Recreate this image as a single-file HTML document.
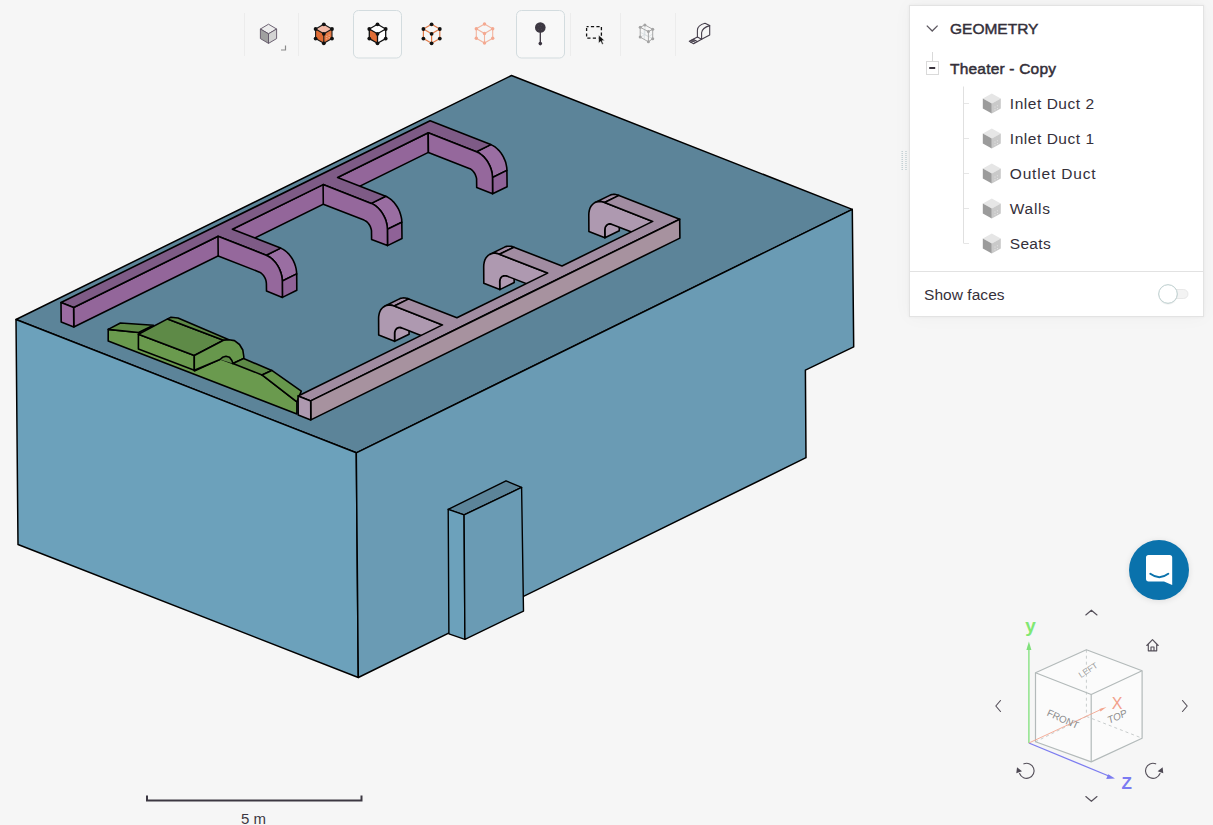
<!DOCTYPE html>
<html><head><meta charset="utf-8">
<style>
html,body{margin:0;padding:0;}
body{width:1213px;height:825px;overflow:hidden;background:#f6f6f6;position:relative;font-family:"Liberation Sans",sans-serif;color:#35303a;}
.abs{position:absolute;}
#model{position:absolute;left:0;top:0;}
.panel{position:absolute;left:909px;top:5px;width:293px;height:310px;background:#fff;border:1px solid #e3e3e3;box-shadow:0 0 3px rgba(0,0,0,0.05), 0 0 18px rgba(0,0,0,0.035);}
.t{position:absolute;white-space:nowrap;line-height:1;}
</style></head>
<body>
<svg id="model" width="1213" height="825" viewBox="0 0 1213 825">
<polygon points="511.5,75.5 852.3,209.4 356.3,452.8 16.0,319.5" fill="#5c8499" stroke="#000" stroke-width="1.5" stroke-linejoin="round" />
<polygon points="16.0,319.5 356.3,452.8 358.3,677.5 18.0,544.5" fill="#6ca1bb" stroke="#000" stroke-width="1.5" stroke-linejoin="round" />
<polygon points="356.3,452.8 852.3,209.4 853.7,346.8 805.4,370.2 806.0,457.7 358.3,677.5" fill="#6a9bb4" stroke="#000" stroke-width="1.5" stroke-linejoin="round" />
<polygon points="448.2,509.3 506.0,480.8 521.6,487.4 464.1,514.9" fill="#5c8499" stroke="#000" stroke-width="1.4" stroke-linejoin="round" />
<polygon points="448.2,509.3 464.1,514.9 464.9,639.3 448.9,633.8" fill="#6ca1bb" stroke="#000" stroke-width="1.4" stroke-linejoin="round" />
<polygon points="464.1,514.9 521.6,487.4 523.5,611.1 464.9,639.3" fill="#6a9bb4" stroke="#000" stroke-width="1.4" stroke-linejoin="round" />
<polygon points="108.2,329.4 138.6,332.5 194.3,353.8 194.4,370.9 220.5,358.9 232.9,363.4 243.6,358.6 262.0,374.9 296.9,401.8 296.9,414.0 108.2,340.9" fill="#6a9a4e" stroke="#000" stroke-width="1.6" stroke-linejoin="round" />
<polygon points="108.2,329.4 120.4,323.0 153.5,325.2 138.6,332.5" fill="#5e8a47" stroke="#000" stroke-width="1.6" stroke-linejoin="round" />
<polygon points="138.4,334.2 194.3,355.5 194.3,370.3 138.4,349.1" fill="#6a9a4e" stroke="#000" stroke-width="1.6" stroke-linejoin="round" />
<polygon points="138.4,334.2 167.6,318.9 223.5,340.2 194.3,355.5" fill="#5e8a47" stroke="#000" stroke-width="1.6" stroke-linejoin="round" />
<polygon points="167.6,318.9 171.0,317.2 178.0,318.0 228.9,339.7 223.5,340.2" fill="#5e8a47" stroke="#000" stroke-width="1.6" stroke-linejoin="round" />
<polygon points="220.0,359.5 222.5,357.3 226.0,356.3 229.5,357.2 231.9,360.5 232.9,363.4" fill="#5e8a47" stroke="none" stroke-width="1.6" stroke-linejoin="round" />
<polygon points="194.3,355.5 223.5,340.2 228.9,339.7 234.5,340.6 239.5,344.5 242.8,350.0 243.8,356.5 243.8,358.6 232.9,363.4 231.9,360.5 229.5,357.2 226.0,356.3 222.5,357.3 220.0,359.5 194.3,370.3" fill="#67974c" stroke="#000" stroke-width="1.6" stroke-linejoin="round" />
<polygon points="243.6,358.6 271.8,370.4 262.0,374.9 232.9,363.4" fill="#5e8a47" stroke="#000" stroke-width="1.6" stroke-linejoin="round" />
<polygon points="271.8,370.4 301.3,391.1 296.9,401.8 262.0,374.9" fill="#67974c" stroke="#000" stroke-width="1.6" stroke-linejoin="round" />
<polygon points="73.6,307.5 428.2,132.8 428.4,152.4 73.8,327.0" fill="#93669a" stroke="#000" stroke-width="1.6" stroke-linejoin="round" />
<polygon points="266.2,255.2 268.2,256.2 270.3,257.5 272.3,259.1 274.1,261.0 275.9,263.1 277.5,265.4 278.9,267.8 280.0,270.4 281.0,273.1 281.7,275.7 282.1,278.4 282.3,281.0 296.7,273.9 296.5,271.3 296.1,268.6 295.4,265.9 294.5,263.3 293.3,260.7 291.9,258.2 290.3,255.9 288.6,253.8 286.7,252.0 284.7,250.4 282.7,249.1 280.6,248.1" fill="#9a6ea2" stroke="#000" stroke-width="1.6" stroke-linejoin="round" />
<polygon points="282.3,281.0 296.7,273.9 296.8,290.3 282.4,297.4" fill="#8f6297" stroke="#000" stroke-width="1.6" stroke-linejoin="round" />
<polygon points="371.3,203.4 373.4,204.4 375.4,205.7 377.4,207.3 379.3,209.2 381.0,211.3 382.6,213.6 384.0,216.1 385.2,218.6 386.1,221.3 386.8,224.0 387.2,226.7 387.4,229.3 401.8,222.2 401.7,219.5 401.2,216.9 400.5,214.2 399.6,211.5 398.4,208.9 397.0,206.5 395.4,204.2 393.7,202.1 391.8,200.2 389.8,198.6 387.8,197.3 385.7,196.3" fill="#9a6ea2" stroke="#000" stroke-width="1.6" stroke-linejoin="round" />
<polygon points="387.4,229.3 401.8,222.2 402.0,238.5 387.5,245.6" fill="#8f6297" stroke="#000" stroke-width="1.6" stroke-linejoin="round" />
<polygon points="476.4,151.7 478.5,152.7 480.5,154.0 482.5,155.6 484.4,157.4 486.1,159.5 487.7,161.8 489.1,164.3 490.3,166.9 491.2,169.5 491.9,172.2 492.3,174.9 492.5,177.5 506.9,170.4 506.8,167.8 506.3,165.1 505.7,162.4 504.7,159.8 503.5,157.2 502.1,154.7 500.6,152.4 498.8,150.3 496.9,148.5 495.0,146.9 492.9,145.6 490.8,144.6" fill="#9a6ea2" stroke="#000" stroke-width="1.6" stroke-linejoin="round" />
<polygon points="492.5,177.5 506.9,170.4 507.1,186.7 492.6,193.8" fill="#8f6297" stroke="#000" stroke-width="1.6" stroke-linejoin="round" />
<polygon points="61.0,302.5 430.1,120.8 490.8,144.6 476.4,151.7 428.2,132.8 337.6,177.5 385.7,196.3 371.3,203.4 323.1,184.6 232.4,229.2 280.6,248.1 266.2,255.2 218.0,236.3 73.6,307.5" fill="#7e5b86" stroke="#000" stroke-width="1.6" stroke-linejoin="round" />
<polygon points="218.0,236.3 266.2,255.2 268.2,256.2 270.3,257.5 272.3,259.1 274.1,261.0 275.9,263.1 277.5,265.4 278.9,267.8 280.0,270.4 281.0,273.1 281.7,275.7 282.1,278.4 282.3,281.0 282.4,297.4 266.5,291.1 266.4,283.8 266.4,283.8 266.3,282.6 266.1,281.3 265.8,280.1 265.4,278.9 264.8,277.7 264.2,276.6 263.5,275.5 262.6,274.5 261.8,273.7 260.8,272.9 259.9,272.3 258.9,271.9 218.2,255.9" fill="#95689c" stroke="#000" stroke-width="1.6" stroke-linejoin="round" />
<polygon points="323.1,184.6 371.3,203.4 373.4,204.4 375.4,205.7 377.4,207.3 379.3,209.2 381.0,211.3 382.6,213.6 384.0,216.1 385.2,218.6 386.1,221.3 386.8,224.0 387.2,226.7 387.4,229.3 387.5,245.6 371.6,239.4 371.5,232.0 371.5,232.0 371.5,230.8 371.3,229.6 370.9,228.3 370.5,227.1 370.0,225.9 369.3,224.8 368.6,223.7 367.8,222.8 366.9,221.9 366.0,221.2 365.0,220.6 364.0,220.1 323.3,204.2" fill="#95689c" stroke="#000" stroke-width="1.6" stroke-linejoin="round" />
<polygon points="428.2,132.8 476.4,151.7 478.5,152.7 480.5,154.0 482.5,155.6 484.4,157.4 486.1,159.5 487.7,161.8 489.1,164.3 490.3,166.9 491.2,169.5 491.9,172.2 492.3,174.9 492.5,177.5 492.6,193.8 476.7,187.6 476.6,180.2 476.6,180.2 476.6,179.0 476.4,177.8 476.0,176.6 475.6,175.4 475.1,174.2 474.4,173.0 473.7,172.0 472.9,171.0 472.0,170.2 471.1,169.4 470.1,168.8 469.2,168.4 428.4,152.4" fill="#95689c" stroke="#000" stroke-width="1.6" stroke-linejoin="round" />
<polygon points="61.0,302.5 73.6,307.5 73.8,327.0 61.2,322.1" fill="#9b6ca2" stroke="#000" stroke-width="1.6" stroke-linejoin="round" />
<polygon points="394.6,341.3 394.6,334.0 394.6,332.8 394.8,331.7 395.1,330.8 395.5,329.9 396.1,329.1 396.7,328.5 397.4,328.0 398.2,327.6 399.1,327.5 400.0,327.4 400.9,327.6 401.9,327.9 416.3,320.8 415.4,320.5 414.4,320.3 413.5,320.4 412.7,320.5 411.9,320.9 411.1,321.4 410.5,322.0 410.0,322.8 409.6,323.6 409.3,324.6 409.1,325.7 409.0,326.9 409.1,334.2" fill="#b09bb2" stroke="#000" stroke-width="1.6" stroke-linejoin="round" />
<polygon points="394.3,306.0 393.5,305.7 392.7,305.5 391.8,305.3 391.0,305.2 390.2,305.1 389.4,305.0 388.6,305.1 387.9,305.1 387.1,305.3 386.4,305.5 385.7,305.7 385.0,306.0 399.4,298.9 400.1,298.6 400.8,298.3 401.6,298.2 402.3,298.0 403.1,298.0 403.9,297.9 404.7,298.0 405.5,298.0 406.3,298.2 407.1,298.4 407.9,298.6 408.8,298.9" fill="#a48ea6" stroke="#000" stroke-width="1.6" stroke-linejoin="round" />
<polygon points="499.8,289.6 499.7,282.2 499.7,281.1 499.9,280.0 500.2,279.0 500.6,278.1 501.2,277.3 501.8,276.7 502.5,276.2 503.3,275.9 504.2,275.7 505.1,275.7 506.1,275.8 507.0,276.1 521.5,269.0 520.5,268.7 519.5,268.6 518.6,268.6 517.8,268.8 517.0,269.1 516.2,269.6 515.6,270.2 515.1,271.0 514.7,271.9 514.4,272.9 514.2,273.9 514.1,275.1 514.2,282.5" fill="#b09bb2" stroke="#000" stroke-width="1.6" stroke-linejoin="round" />
<polygon points="499.4,254.3 498.6,254.0 497.8,253.7 497.0,253.5 496.1,253.4 495.3,253.3 494.5,253.3 493.7,253.3 493.0,253.4 492.2,253.5 491.5,253.7 490.8,253.9 490.1,254.2 504.6,247.1 505.2,246.8 505.9,246.6 506.7,246.4 507.4,246.3 508.2,246.2 509.0,246.2 509.8,246.2 510.6,246.3 511.4,246.4 512.2,246.6 513.1,246.9 513.9,247.2" fill="#a48ea6" stroke="#000" stroke-width="1.6" stroke-linejoin="round" />
<polygon points="604.9,237.8 604.8,230.4 604.9,229.3 605.0,228.2 605.3,227.2 605.8,226.3 606.3,225.6 606.9,224.9 607.6,224.5 608.4,224.1 609.3,223.9 610.2,223.9 611.2,224.1 612.1,224.4 626.6,217.3 625.6,217.0 624.7,216.8 623.7,216.8 622.9,217.0 622.1,217.3 621.4,217.8 620.7,218.5 620.2,219.2 619.8,220.1 619.5,221.1 619.3,222.2 619.2,223.3 619.3,230.7" fill="#b09bb2" stroke="#000" stroke-width="1.6" stroke-linejoin="round" />
<polygon points="604.6,202.5 603.7,202.2 602.9,202.0 602.1,201.8 601.3,201.6 600.4,201.5 599.6,201.5 598.9,201.5 598.1,201.6 597.3,201.8 596.6,201.9 595.9,202.2 595.2,202.5 609.7,195.4 610.4,195.1 611.1,194.8 611.8,194.6 612.5,194.5 613.3,194.4 614.1,194.4 614.9,194.4 615.7,194.5 616.5,194.7 617.3,194.9 618.2,195.1 619.0,195.4" fill="#a48ea6" stroke="#000" stroke-width="1.6" stroke-linejoin="round" />
<polygon points="442.5,324.9 394.3,306.0 392.3,305.4 390.2,305.1 388.2,305.1 386.4,305.5 384.7,306.2 383.1,307.2 381.8,308.5 380.6,310.1 379.7,312.0 379.1,314.1 378.7,316.3 378.6,318.7 378.7,335.1 394.6,341.3 394.6,334.0 394.6,334.0 394.6,332.8 394.8,331.7 395.1,330.8 395.5,329.9 396.1,329.1 396.7,328.5 397.4,328.0 398.2,327.6 399.1,327.5 400.0,327.4 400.9,327.6 401.9,327.9 442.7,343.9" fill="#ae99b0" stroke="#000" stroke-width="1.6" stroke-linejoin="round" />
<polygon points="547.6,273.1 499.4,254.3 497.4,253.6 495.3,253.3 493.4,253.3 491.5,253.7 489.8,254.4 488.2,255.4 486.9,256.7 485.7,258.3 484.8,260.2 484.2,262.3 483.8,264.6 483.7,267.0 483.8,283.3 499.8,289.6 499.7,282.2 499.7,282.2 499.7,281.1 499.9,280.0 500.2,279.0 500.6,278.1 501.2,277.3 501.8,276.7 502.5,276.2 503.3,275.9 504.2,275.7 505.1,275.7 506.1,275.8 507.0,276.1 547.8,292.1" fill="#ae99b0" stroke="#000" stroke-width="1.6" stroke-linejoin="round" />
<polygon points="652.7,221.4 604.6,202.5 602.5,201.9 600.4,201.5 598.5,201.6 596.6,201.9 594.9,202.6 593.3,203.7 592.0,205.0 590.8,206.6 589.9,208.4 589.3,210.5 588.9,212.8 588.8,215.2 588.9,231.6 604.9,237.8 604.8,230.4 604.8,230.4 604.9,229.3 605.0,228.2 605.3,227.2 605.8,226.3 606.3,225.6 606.9,224.9 607.6,224.5 608.4,224.1 609.3,223.9 610.2,223.9 611.2,224.1 612.1,224.4 652.9,240.3" fill="#ae99b0" stroke="#000" stroke-width="1.6" stroke-linejoin="round" />
<polygon points="310.7,400.9 679.7,219.2 619.0,195.4 604.6,202.5 652.7,221.4 562.0,266.0 513.9,247.2 499.4,254.3 547.6,273.1 456.9,317.8 408.8,298.9 394.3,306.0 442.5,324.9 298.1,396.0" fill="#a18ca1" stroke="#000" stroke-width="1.6" stroke-linejoin="round" />
<polygon points="310.7,400.9 679.7,219.2 679.9,238.1 310.8,419.9" fill="#a7929f" stroke="#000" stroke-width="1.6" stroke-linejoin="round" />
<polygon points="298.1,396.0 310.7,400.9 310.8,419.9 298.2,415.0" fill="#ae99b0" stroke="#000" stroke-width="1.6" stroke-linejoin="round" />
</svg>

<!-- toolbar -->
<svg class="abs" style="left:0;top:0" width="760" height="70" viewBox="0 0 760 70">
  <g stroke="#ececec" stroke-width="1">
    <line x1="244.5" y1="13" x2="244.5" y2="56"/>
    <line x1="298.5" y1="13" x2="298.5" y2="56"/>
    <line x1="570.5" y1="13" x2="570.5" y2="56"/>
    <line x1="620.5" y1="13" x2="620.5" y2="56"/>
    <line x1="675.5" y1="13" x2="675.5" y2="56"/>
  </g>
  <rect x="353.5" y="10.5" width="48" height="47.5" rx="5" fill="#f8f8f8" stroke="#d3dcdf"/>
  <rect x="516.5" y="10.5" width="48" height="47.5" rx="5" fill="#f8f8f8" stroke="#d3dcdf"/>
  <!-- icon1 grey cube -->
  <g transform="translate(268.5,33.8)">
    <polygon points="0,-9.6 8.1,-4.8 0,0 -8.1,-4.8" fill="#ededed" stroke="#5f5465" stroke-width="0.9" stroke-linejoin="round"/>
    <polygon points="-8.1,-4.8 0,0 0,9.6 -8.1,4.8" fill="#a0a0a0" stroke="#5f5465" stroke-width="0.9" stroke-linejoin="round"/>
    <polygon points="8.1,-4.8 0,0 0,9.6 8.1,4.8" fill="#d3d3d3" stroke="#5f5465" stroke-width="0.9" stroke-linejoin="round"/>
  </g>
  <polyline points="281,50 285.5,50 285.5,45.5" fill="none" stroke="#8a8a8a" stroke-width="1.2"/>
  <!-- icon2 orange solid cube -->
  <g transform="translate(323.8,33.8)">
    <polygon points="0,-9.5 8.2,-4.8 0,0 -8.2,-4.8" fill="#f3b9a6"/>
    <polygon points="-8.2,-4.8 0,0 0,9.5 -8.2,4.8" fill="#e06d35"/>
    <polygon points="8.2,-4.8 0,0 0,9.5 8.2,4.8" fill="#e57a45"/>
    <g fill="none" stroke="#1a1a1a" stroke-width="1.1" stroke-linejoin="round">
      <polygon points="0,-9.5 8.2,-4.8 8.2,4.8 0,9.5 -8.2,4.8 -8.2,-4.8"/>
      <polyline points="-8.2,-4.8 0,0 8.2,-4.8"/><line x1="0" y1="0" x2="0" y2="9.5"/>
    </g>
    <g fill="#f6d0c0"><circle cx="3" cy="2.5" r="0.55"/><circle cx="5.3" cy="1.3" r="0.55"/><circle cx="3" cy="5" r="0.55"/><circle cx="5.3" cy="3.8" r="0.55"/></g>
    <g fill="#111"><circle cx="0" cy="-9.5" r="1.9"/><circle cx="8.2" cy="-4.8" r="1.9"/><circle cx="-8.2" cy="-4.8" r="1.9"/><circle cx="0" cy="0" r="1.9"/><circle cx="8.2" cy="4.8" r="1.9"/><circle cx="-8.2" cy="4.8" r="1.9"/><circle cx="0" cy="9.5" r="1.9"/></g>
  </g>
  <!-- icon3 white cube with orange left face -->
  <g transform="translate(377.5,33.8)">
    <polygon points="0,-9.5 8.2,-4.8 0,0 -8.2,-4.8" fill="#fff"/>
    <polygon points="-8.2,-4.8 0,0 0,9.5 -8.2,4.8" fill="#e06d35"/>
    <polygon points="8.2,-4.8 0,0 0,9.5 8.2,4.8" fill="#fff"/>
    <g fill="none" stroke="#111" stroke-width="1.3" stroke-linejoin="round">
      <polygon points="0,-9.5 8.2,-4.8 8.2,4.8 0,9.5 -8.2,4.8 -8.2,-4.8"/>
      <polyline points="-8.2,-4.8 0,0 8.2,-4.8"/><line x1="0" y1="0" x2="0" y2="9.5"/>
    </g>
    <g fill="#111"><circle cx="0" cy="-9.5" r="1.9"/><circle cx="8.2" cy="-4.8" r="1.9"/><circle cx="-8.2" cy="-4.8" r="1.9"/><circle cx="0" cy="0" r="1.9"/><circle cx="8.2" cy="4.8" r="1.9"/><circle cx="-8.2" cy="4.8" r="1.9"/><circle cx="0" cy="9.5" r="1.9"/></g>
  </g>
  <!-- icon4 orange wireframe -->
  <g transform="translate(431.6,33.8)">
    <g fill="none" stroke="#e27a48" stroke-width="1.2" stroke-linejoin="round">
      <polygon points="0,-9.5 8.2,-4.8 8.2,4.8 0,9.5 -8.2,4.8 -8.2,-4.8"/>
      <polyline points="-8.2,-4.8 0,0 8.2,-4.8"/><line x1="0" y1="0" x2="0" y2="9.5"/>
    </g>
    <g fill="#111"><circle cx="0" cy="-9.5" r="1.9"/><circle cx="8.2" cy="-4.8" r="1.9"/><circle cx="-8.2" cy="-4.8" r="1.9"/><circle cx="0" cy="0" r="1.9"/><circle cx="8.2" cy="4.8" r="1.9"/><circle cx="-8.2" cy="4.8" r="1.9"/><circle cx="0" cy="9.5" r="1.9"/></g>
  </g>
  <!-- icon5 light salmon wireframe -->
  <g transform="translate(484.5,33.5)">
    <g fill="none" stroke="#f2b5a0" stroke-width="1.1" stroke-linejoin="round">
      <polygon points="0,-9.5 8.2,-4.8 8.2,4.8 0,9.5 -8.2,4.8 -8.2,-4.8"/>
      <polyline points="-8.2,-4.8 0,0 8.2,-4.8"/><line x1="0" y1="0" x2="0" y2="9.5"/>
    </g>
    <g fill="#f4a890"><circle cx="0" cy="-9.5" r="1.7"/><circle cx="8.2" cy="-4.8" r="1.7"/><circle cx="-8.2" cy="-4.8" r="1.7"/><circle cx="0" cy="0" r="1.7"/><circle cx="8.2" cy="4.8" r="1.7"/><circle cx="-8.2" cy="4.8" r="1.7"/><circle cx="0" cy="9.5" r="1.7"/></g>
  </g>
  <!-- icon6 pin -->
  <line x1="540.3" y1="30" x2="540.3" y2="43" stroke="#3a3440" stroke-width="1.3"/>
  <circle cx="540.3" cy="27.5" r="5.3" fill="#3d3842"/><g fill="#5b5560"><circle cx="538.6" cy="25.6" r="0.45"/><circle cx="541.6" cy="25.6" r="0.45"/><circle cx="540.1" cy="27.6" r="0.45"/><circle cx="538.6" cy="29.3" r="0.45"/><circle cx="541.6" cy="29.3" r="0.45"/></g>
  <circle cx="540.3" cy="43.6" r="1.8" fill="#3a3440"/>
  <!-- icon8 box select -->
  <rect x="586.6" y="26.6" width="14.8" height="11.6" fill="none" stroke="#111" stroke-width="1.3" stroke-dasharray="3.2 2.3" stroke-dashoffset="1.2"/>
  <path d="M598.6,35 L598.6,43.2 L600.6,41.4 L602.1,44.4 L603.5,43.8 L602,40.8 L604.7,40.6 Z" fill="#111" stroke="#f6f6f6" stroke-width="0.6"/>
  <!-- icon10 grey mesh cube -->
  <g fill="none" stroke="#d2dadc" stroke-width="0.7">
    <line x1="644.9" y1="24.9" x2="644.9" y2="34.5"/><line x1="640.2" y1="37.1" x2="644.9" y2="34.5"/><line x1="652.7" y1="38.7" x2="644.9" y2="34.5"/>
    <line x1="644.3" y1="29.5" x2="644.3" y2="39.5"/><line x1="640.2" y1="32.2" x2="648.4" y2="36.7"/><line x1="652.7" y1="34" x2="648.4" y2="36.7"/>
  </g>
  <g fill="none" stroke="#a9a9a9" stroke-width="1" stroke-linejoin="round">
    <polygon points="644.9,24.9 652.7,29.3 648.4,31.6 640.2,27.3"/>
    <polyline points="640.2,27.3 640.2,37.1 648.4,41.8 652.7,38.7 652.7,29.3"/>
    <line x1="648.4" y1="31.6" x2="648.4" y2="41.8"/>
  </g>
  <g fill="#a3a3a3"><circle cx="644.9" cy="24.9" r="1.5"/><circle cx="640.2" cy="27.3" r="1.5"/><circle cx="652.7" cy="29.3" r="1.5"/><circle cx="648.4" cy="31.6" r="1.5"/><circle cx="640.2" cy="37.1" r="1.5"/><circle cx="652.7" cy="38.7" r="1.5"/><circle cx="648.4" cy="41.8" r="1.5"/></g>
  <!-- icon12 measuring tape -->
  <g fill="none" stroke="#453e4b" stroke-width="1.1" stroke-linejoin="round" stroke-linecap="round">
    <path d="M697.4,37.1 L697.4,30.3 Q697.6,25.2 705,23.3 L709.7,25.6 L709.7,34.9 L701.6,39.2 L697.4,37.1"/>
    <path d="M709.7,25.6 Q702.2,27.6 701.6,32.8 L701.6,39.2"/>
    <path d="M697.4,37.1 L689.3,41.3 L693.6,43.8 L701.6,39.2"/>
    <path d="M691.5,40.2 L695.5,42.5 M693.2,39.3 L697.2,41.6 M690.8,42.2 L694.8,40"/>
  </g>
</svg>

<div class="panel"></div>
<svg class="abs" style="left:0;top:0" width="1213" height="825" viewBox="0 0 1213 825">
  <!-- drag handle -->
  <g stroke="#bfcdd1" stroke-width="1.4" stroke-dasharray="1 1"><line x1="902.2" y1="151" x2="902.2" y2="171"/><line x1="906" y1="151" x2="906" y2="171"/></g>
  <!-- chevron -->
  <polyline points="926.8,25.6 932.2,31 937.6,25.6" fill="none" stroke="#5d5860" stroke-width="1.3"/>
  <!-- expander -->
  <line x1="932.5" y1="52" x2="932.5" y2="61.5" stroke="#d9d9d9" stroke-width="1"/>
  <rect x="926.5" y="61.5" width="12" height="13" fill="#fff" stroke="#dadada" stroke-width="1"/>
  <line x1="929.2" y1="68" x2="935.2" y2="68" stroke="#3a343e" stroke-width="2"/>
  <!-- tree line -->
  <line x1="963.5" y1="86.5" x2="963.5" y2="243.5" stroke="#e0e0e0" stroke-width="1"/>
  <g stroke="#e6e6e6" stroke-width="1">
    <line x1="964" y1="103.5" x2="969" y2="103.5"/><line x1="964" y1="138.5" x2="969" y2="138.5"/>
    <line x1="964" y1="173.5" x2="969" y2="173.5"/><line x1="964" y1="208.5" x2="969" y2="208.5"/>
    <line x1="964" y1="243.5" x2="969" y2="243.5"/>
  </g>
  
  <g transform="translate(991.8,103.5)">
      <polygon points="0,-10 9,-5 0,0 -9,-5" fill="#e6e6e6"/>
      <polygon points="-9,-5 0,0 0,10 -9,5" fill="#9b9b9b"/>
      <polygon points="9,-5 0,0 0,10 9,5" fill="#c9c9c9"/>
      <circle cx="3.2" cy="3.5" r="0.5" fill="#eee"/><circle cx="5.6" cy="2.2" r="0.5" fill="#eee"/>
      <circle cx="3.2" cy="6.2" r="0.5" fill="#eee"/><circle cx="5.6" cy="5" r="0.5" fill="#eee"/>
    </g>
  <g transform="translate(991.8,138.5)">
      <polygon points="0,-10 9,-5 0,0 -9,-5" fill="#e6e6e6"/>
      <polygon points="-9,-5 0,0 0,10 -9,5" fill="#9b9b9b"/>
      <polygon points="9,-5 0,0 0,10 9,5" fill="#c9c9c9"/>
      <circle cx="3.2" cy="3.5" r="0.5" fill="#eee"/><circle cx="5.6" cy="2.2" r="0.5" fill="#eee"/>
      <circle cx="3.2" cy="6.2" r="0.5" fill="#eee"/><circle cx="5.6" cy="5" r="0.5" fill="#eee"/>
    </g>
  <g transform="translate(991.8,173.5)">
      <polygon points="0,-10 9,-5 0,0 -9,-5" fill="#e6e6e6"/>
      <polygon points="-9,-5 0,0 0,10 -9,5" fill="#9b9b9b"/>
      <polygon points="9,-5 0,0 0,10 9,5" fill="#c9c9c9"/>
      <circle cx="3.2" cy="3.5" r="0.5" fill="#eee"/><circle cx="5.6" cy="2.2" r="0.5" fill="#eee"/>
      <circle cx="3.2" cy="6.2" r="0.5" fill="#eee"/><circle cx="5.6" cy="5" r="0.5" fill="#eee"/>
    </g>
  <g transform="translate(991.8,208.5)">
      <polygon points="0,-10 9,-5 0,0 -9,-5" fill="#e6e6e6"/>
      <polygon points="-9,-5 0,0 0,10 -9,5" fill="#9b9b9b"/>
      <polygon points="9,-5 0,0 0,10 9,5" fill="#c9c9c9"/>
      <circle cx="3.2" cy="3.5" r="0.5" fill="#eee"/><circle cx="5.6" cy="2.2" r="0.5" fill="#eee"/>
      <circle cx="3.2" cy="6.2" r="0.5" fill="#eee"/><circle cx="5.6" cy="5" r="0.5" fill="#eee"/>
    </g>
  <g transform="translate(991.8,243.5)">
      <polygon points="0,-10 9,-5 0,0 -9,-5" fill="#e6e6e6"/>
      <polygon points="-9,-5 0,0 0,10 -9,5" fill="#9b9b9b"/>
      <polygon points="9,-5 0,0 0,10 9,5" fill="#c9c9c9"/>
      <circle cx="3.2" cy="3.5" r="0.5" fill="#eee"/><circle cx="5.6" cy="2.2" r="0.5" fill="#eee"/>
      <circle cx="3.2" cy="6.2" r="0.5" fill="#eee"/><circle cx="5.6" cy="5" r="0.5" fill="#eee"/>
    </g>
  <!-- divider -->
  <line x1="910" y1="271.5" x2="1203" y2="271.5" stroke="#e2e2e2" stroke-width="1"/>
  <!-- toggle -->
  <rect x="1160.5" y="289.5" width="27.5" height="9" rx="4.5" fill="#f3f3f3" stroke="#e3e3e3" stroke-width="0.8"/>
  <circle cx="1168" cy="295.5" r="9.5" fill="#000" fill-opacity="0.04"/><circle cx="1168" cy="294" r="9.3" fill="#fff" stroke="#b2c6c6" stroke-width="0.9"/>
</svg>
<div class="t" style="left:950px;top:20.5px;font-size:15.5px;-webkit-text-stroke:0.45px #332e38;letter-spacing:0px;">GEOMETRY</div>
<div class="t" style="left:950px;top:60.5px;font-size:15.5px;-webkit-text-stroke:0.5px #332e38;letter-spacing:0.2px;">Theater - Copy</div>
<div class="t" style="left:1009.8px;top:95.5px;font-size:15.5px;letter-spacing:0.54px;">Inlet Duct 2</div>
<div class="t" style="left:1009.8px;top:130.5px;font-size:15.5px;letter-spacing:0.54px;">Inlet Duct 1</div>
<div class="t" style="left:1009.8px;top:165.5px;font-size:15.5px;letter-spacing:0.82px;">Outlet Duct</div>
<div class="t" style="left:1009.8px;top:200.5px;font-size:15.5px;letter-spacing:0.72px;">Walls</div>
<div class="t" style="left:1009.8px;top:235.5px;font-size:15.5px;letter-spacing:0.3px;">Seats</div>
<div class="t" style="left:924px;top:286.5px;font-size:15.5px;letter-spacing:0.05px;">Show faces</div>


<!-- chat button -->
<div class="abs" style="left:1129px;top:540px;width:60px;height:60px;border-radius:50%;background:#0a72ac;box-shadow:0 1px 6px rgba(0,0,0,0.10);"></div>
<svg class="abs" style="left:1120px;top:530px" width="80" height="80" viewBox="1120 530 80 80">
  <path d="M1148.6,555 L1169.6,555 Q1172.2,555 1172.2,557.6 L1172.2,585 L1164,581.4 L1148.6,581.4 Q1146,581.4 1146,578.8 L1146,557.6 Q1146,555 1148.6,555 Z" fill="#fff"/>
  <path d="M1150.3,573.8 Q1159.3,580.5 1168.3,573.8" fill="none" stroke="#0a72ac" stroke-width="2" stroke-linecap="round"/>
</svg>
<!-- nav cube -->
<svg class="abs" style="left:980px;top:595px" width="233" height="230" viewBox="980 595 233 230">
  <g fill="none" stroke="#55505a" stroke-width="1.15" stroke-linecap="round" stroke-linejoin="round">
    <polyline points="1085.8,615 1091.4,610.2 1097,615"/>
    <polyline points="1085.8,796.5 1091.4,801.3 1097,796.5"/>
    <polyline points="1000.5,700.5 995.8,706 1000.5,711.5"/>
    <polyline points="1182.5,700.5 1187.2,706 1182.5,711.5"/>
    <path d="M1146.8,645.5 L1152.5,639.6 L1158.2,645.5 M1148.3,644 L1148.3,650.8 L1156.7,650.8 L1156.7,644 M1151,650.8 L1151,647 L1154,647 L1154,650.8"/>
    <path d="M1023.9,763.8 A7.5,7.5 0 1 1 1019.6,773.5"/>
    <path d="M1155.7,763.8 A7.5,7.5 0 1 0 1160,773.5"/>
  </g>
  <path d="M1017,767.3 L1016.3,773.3 L1022,771.3 Z" fill="#4f4a55"/>
  <path d="M1162.6,767.3 L1163.3,773.3 L1157.6,771.3 Z" fill="#4f4a55"/>
  <!-- cube faces -->
  <polygon points="1086.4,649.7 1142.1,670.8 1091.2,694.5 1035.5,672.7" fill="#fbfbfb" fill-opacity="0.85"/>
  <polygon points="1035.5,672.7 1091.2,694.5 1091.2,761.9 1035.5,741.8" fill="#fbfbfb" fill-opacity="0.85"/>
  <polygon points="1091.2,694.5 1142.1,670.8 1142.1,738.2 1091.2,761.9" fill="#fbfbfb" fill-opacity="0.85"/>
  <g stroke="#c9cdcd" stroke-width="1" stroke-dasharray="3 3" fill="none">
    <line x1="1086.4" y1="649.7" x2="1086.4" y2="716.4"/>
    <line x1="1086.4" y1="716.4" x2="1142.1" y2="738.2"/>
    <line x1="1086.4" y1="716.4" x2="1035.5" y2="741.8"/>
  </g>
  <g stroke="#b3baba" stroke-width="1.2" fill="none" stroke-linejoin="round">
    <polygon points="1086.4,649.7 1142.1,670.8 1142.1,738.2 1091.2,761.9 1035.5,741.8 1035.5,672.7"/>
    <polyline points="1035.5,672.7 1091.2,694.5 1142.1,670.8"/>
    <line x1="1091.2" y1="694.5" x2="1091.2" y2="761.9"/>
  </g>
  <!-- axes -->
  <line x1="1028.9" y1="743" x2="1028.9" y2="646" stroke="#7fe07a" stroke-width="1.3"/>
  <path d="M1028.9,641.5 L1031.4,650 L1026.4,650 Z" fill="#7fe07a"/>
  <line x1="1028.9" y1="743" x2="1110" y2="776.5" stroke="#7c7cf0" stroke-width="1.3"/>
  <path d="M1115,778.6 L1106.2,779.1 L1108.2,774.2 Z" fill="#7c7cf0"/>
  <line x1="1028.9" y1="743" x2="1103" y2="708.5" stroke="#f3a58f" stroke-width="0.9"/>
  <path d="M1106.5,707 L1100.5,711.6 L1099.4,709 Z" fill="#f3a58f"/>
  <text x="1030.5" y="632" font-family="Liberation Sans" font-size="19" font-weight="bold" fill="#80e872" text-anchor="middle">y</text>
  <text x="1126.8" y="788.5" font-family="Liberation Sans" font-size="17" font-weight="bold" fill="#7b7bf2" text-anchor="middle">Z</text>
  <text x="1117" y="708.5" font-family="Liberation Sans" font-size="16" fill="#f2a08c" text-anchor="middle">X</text>
  <text x="1063" y="722.5" font-family="Liberation Sans" font-size="9.8" fill="#8c8c8c" text-anchor="middle" transform="rotate(24 1063 719)">FRONT</text>
  <text x="1117" y="720" font-family="Liberation Sans" font-size="10" fill="#8c8c8c" text-anchor="middle" font-style="italic" transform="rotate(-24 1117 716)">TOP</text>
  <text x="1088" y="673" font-family="Liberation Sans" font-size="8.5" fill="#9c9c9c" text-anchor="middle" transform="rotate(-33 1088 670)">LEFT</text>
</svg>
<!-- scale bar -->
<svg class="abs" style="left:140px;top:790px" width="230" height="20" viewBox="140 790 230 20">
  <path d="M147,795.5 L147,800.5 L361.5,800.5 L361.5,795.5" fill="none" stroke="#3c3842" stroke-width="2"/>
</svg>
<div class="t" style="left:241px;top:810.5px;font-size:15px;color:#3c3842;">5 m</div>
</body></html>
